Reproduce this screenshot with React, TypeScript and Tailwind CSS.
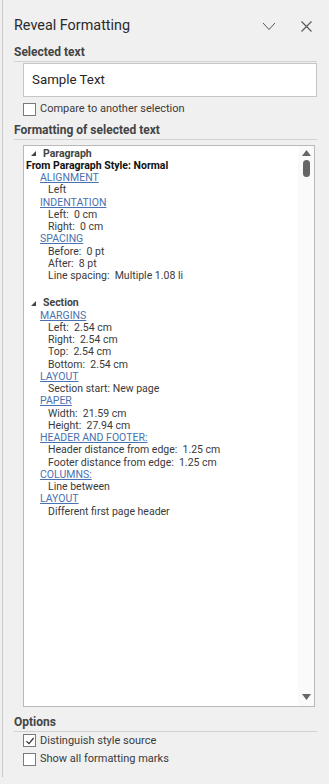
import React from "react";

type Row =
  | { kind: "group"; text: string }
  | { kind: "source"; text: string }
  | { kind: "link"; text: string }
  | { kind: "value"; text: string }
  | { kind: "gap" };

const rows: Row[] = [
  { kind: "group", text: "Paragraph" },
  { kind: "source", text: "From Paragraph Style: Normal" },
  { kind: "link", text: "ALIGNMENT" },
  { kind: "value", text: "Left" },
  { kind: "link", text: "INDENTATION" },
  { kind: "value", text: "Left:  0 cm" },
  { kind: "value", text: "Right:  0 cm" },
  { kind: "link", text: "SPACING" },
  { kind: "value", text: "Before:  0 pt" },
  { kind: "value", text: "After:  8 pt" },
  { kind: "value", text: "Line spacing:  Multiple 1.08 li" },
  { kind: "gap" },
  { kind: "group", text: "Section" },
  { kind: "link", text: "MARGINS" },
  { kind: "value", text: "Left:  2.54 cm" },
  { kind: "value", text: "Right:  2.54 cm" },
  { kind: "value", text: "Top:  2.54 cm" },
  { kind: "value", text: "Bottom:  2.54 cm" },
  { kind: "link", text: "LAYOUT" },
  { kind: "value", text: "Section start: New page" },
  { kind: "link", text: "PAPER" },
  { kind: "value", text: "Width:  21.59 cm" },
  { kind: "value", text: "Height:  27.94 cm" },
  { kind: "link", text: "HEADER AND FOOTER:" },
  { kind: "value", text: "Header distance from edge:  1.25 cm" },
  { kind: "value", text: "Footer distance from edge:  1.25 cm" },
  { kind: "link", text: "COLUMNS:" },
  { kind: "value", text: "Line between" },
  { kind: "link", text: "LAYOUT" },
  { kind: "value", text: "Different first page header" },
];

function Checkbox({ checked }: { checked?: boolean }) {
  return (
    <span className="w-[13px] h-[13px] border border-[#7a7a7a] bg-white flex items-center justify-center shrink-0">
      {checked && (
        <svg width="10" height="10" viewBox="0 0 10 10">
          <path d="M1.5 5.2 L4 7.6 L8.6 2" fill="none" stroke="#333" strokeWidth="1.2" />
        </svg>
      )}
    </span>
  );
}

function SectionLabel({ children }: { children: React.ReactNode }) {
  return (
    <div className="font-bold text-[12px] leading-[16px] text-[#444] border-b border-[#d2d2d2] pb-[1px] mr-[12px]">
      {children}
    </div>
  );
}

function FormatRow({ row }: { row: Row }) {
  if (row.kind === "gap") return <div className="h-[15px]" />;
  if (row.kind === "group")
    return (
      <div className="flex items-center pl-[7px] font-bold text-[#444]">
        <svg width="5" height="5" viewBox="0 0 5 5" className="mr-[7px]">
          <path d="M5 0 L5 5 L0 5 Z" fill="#444" />
        </svg>
        {row.text}
      </div>
    );
  if (row.kind === "source")
    return <div className="pl-[2px] font-bold text-[#111]">{row.text}</div>;
  if (row.kind === "link")
    return <div className="pl-[16px] text-[#4a72b0] underline underline-offset-[1px]">{row.text}</div>;
  return <div className="pl-[24px] text-[#3a3a3a] whitespace-pre">{row.text}</div>;
}

export default function App() {
  return (
    <div className="w-[329px] h-[784px] bg-[#f0f0f0] font-['Roboto',sans-serif] overflow-hidden">
      <div className="ml-[2px] h-[777px] border-l border-[#c9c9c9] pl-[11px] pt-[15px]">
        <div className="flex items-center h-[22px] mr-[12px]">
          <div className="text-[14.4px] text-[#2b2b2b] flex-1">Reveal Formatting</div>
          <svg width="14" height="9" viewBox="0 0 14 9" className="mr-[25px]">
            <path d="M1 1 L7 7.5 L13 1" fill="none" stroke="#555" strokeWidth="1" />
          </svg>
          <svg width="11" height="11" viewBox="0 0 11 11" className="mr-[5px]">
            <path d="M0.5 0.5 L10.5 10.5 M10.5 0.5 L0.5 10.5" fill="none" stroke="#555" strokeWidth="1.1" />
          </svg>
        </div>
        <div className="mt-[7px]">
          <SectionLabel>Selected text</SectionLabel>
        </div>
        <div className="ml-[9px] mr-[12px] mt-[1px] h-[34px] bg-white border border-[#c6c6c6] flex items-center pl-[8px] text-[13.3px] text-[#262626]">
          Sample Text
        </div>
        <label className="ml-[9px] mt-[4px] flex items-center gap-[4px] text-[11px] text-[#3a3a3a]">
          <Checkbox />
          Compare to another selection
        </label>
        <div className="mt-[4px]">
          <SectionLabel>Formatting of selected text</SectionLabel>
        </div>
        <div className="ml-[9px] mr-[14px] mt-[5px] h-[562px] bg-white border border-[#b9b9b9] flex">
          <div className="flex-1 pt-[2px] text-[10.5px] leading-[12.25px]">
            {rows.map((r, i) => (
              <FormatRow key={i} row={r} />
            ))}
          </div>
          <div className="w-[16px] flex flex-col items-center bg-[#fafafa] pt-[4px] pb-[6px]">
            <svg width="9" height="6" viewBox="0 0 9 6">
              <path d="M4.5 0 L9 6 L0 6 Z" fill="#666" />
            </svg>
            <div className="mt-[4px] w-[7px] h-[17px] rounded-full bg-[#666]" />
            <div className="flex-1" />
            <svg width="9" height="6" viewBox="0 0 9 6">
              <path d="M0 0 L9 0 L4.5 6 Z" fill="#666" />
            </svg>
          </div>
        </div>
        <div className="mt-[7px]">
          <SectionLabel>Options</SectionLabel>
        </div>
        <label className="ml-[9px] mt-[1px] flex items-center gap-[4px] text-[11px] text-[#3a3a3a]">
          <Checkbox checked />
          Distinguish style source
        </label>
        <label className="ml-[9px] mt-[2px] flex items-center gap-[4px] text-[11px] text-[#3a3a3a]">
          <Checkbox />
          Show all formatting marks
        </label>
      </div>
    </div>
  );
}
